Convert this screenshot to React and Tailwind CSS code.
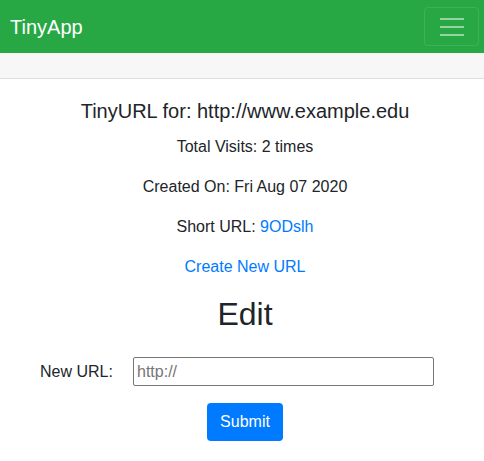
import React, { useState } from "react";

export default function App() {
  const [newUrl, setNewUrl] = useState("");

  return (
    <div className="min-h-screen bg-white text-[#212529] font-['Liberation_Sans',Arial,sans-serif]">
      {/* Navbar */}
      <nav className="flex h-[53px] items-center justify-between bg-[#28a745] pl-[10px] pr-[5px]">
        <a href="#" className="text-[20px] leading-[24px] text-white">TinyApp</a>
        <button className="flex h-[39px] w-[55px] items-center justify-center rounded-[4px] border border-white/10">
          <svg width="24" height="20" viewBox="0 0 24 20" fill="none">
            <path d="M0 2h24M0 10h24M0 18h24" stroke="rgba(255,255,255,0.5)" strokeWidth="2" />
          </svg>
        </button>
      </nav>

      {/* Card */}
      <div>
        <div className="h-[26px] border-b border-[#dfdfdf] bg-[#f7f7f7]" />
        <div className="pt-[20px] pl-[6px] text-center">
          <h5 className="mb-[12px] text-[20px] leading-[24px]">TinyURL for: http://www.example.edu</h5>
          <p className="mb-[16px] text-[16px] leading-[24px]">Total Visits: 2 times</p>
          <p className="mb-[16px] text-[16px] leading-[24px]">Created On: Fri Aug 07 2020</p>
          <p className="mb-[16px] text-[16px] leading-[24px]">
            Short URL: <a href="#" className="text-[#007bff]">9ODslh</a>
          </p>
          <p className="mb-[16px] text-[16px] leading-[24px]">
            <a href="#" className="text-[#007bff]">Create New URL</a>
          </p>
          <h2 className="text-[32px] leading-[38px]">Edit</h2>
        </div>

        <form className="mt-[24px]" onSubmit={e => e.preventDefault()}>
          <div className="flex items-center pl-[40px]">
            <label className="w-[93px] text-left text-[16px] leading-[24px]">New URL:</label>
            <input
              type="text"
              placeholder="http://"
              value={newUrl}
              onChange={e => setNewUrl(e.target.value)}
              className="h-[29px] w-[301px] rounded-[2px] border border-[#767676] px-[3px] text-[16px] outline-none placeholder:text-[#757575]"
            />
          </div>
          <div className="mt-[17px] flex justify-center pl-[6px]">
            <button className="h-[38px] rounded-[4px] bg-[#007bff] px-[13px] text-[16px] leading-[24px] text-white">
              Submit
            </button>
          </div>
        </form>
      </div>
    </div>
  );
}
